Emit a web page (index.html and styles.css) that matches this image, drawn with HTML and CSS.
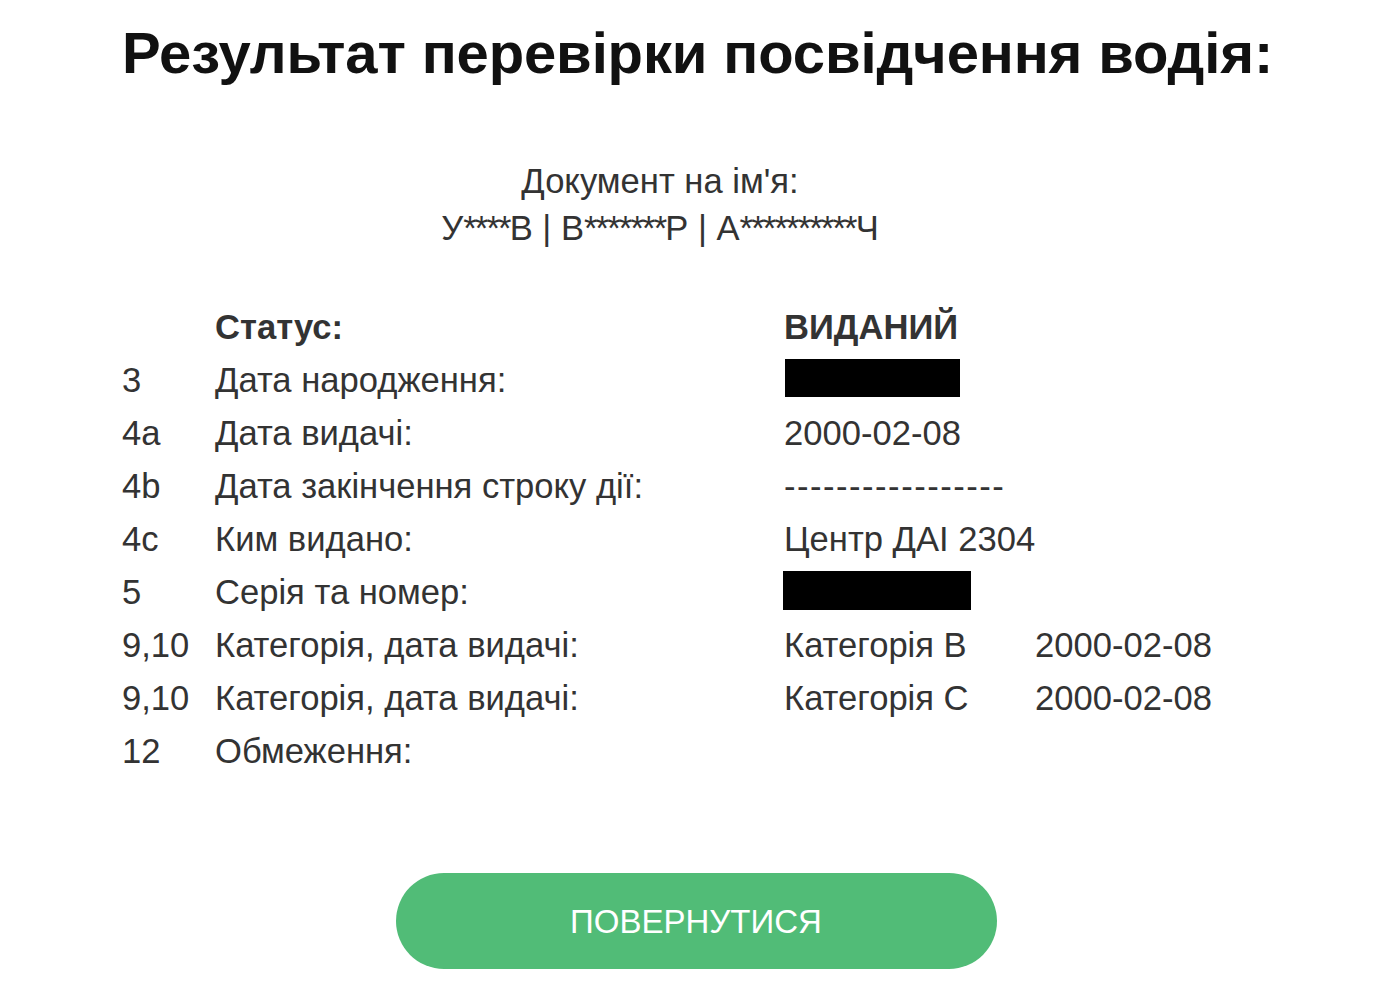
FILE: index.html
```html
<!DOCTYPE html>
<html lang="uk">
<head>
<meta charset="utf-8">
<title>Результат перевірки посвідчення водія</title>
<link rel="stylesheet" href="styles.css">
</head>
<body>
<main class="page">
  <h1 class="title">Результат перевірки посвідчення водія:</h1>
  <section class="owner">
    <p class="owner-label">Документ на ім'я:</p>
    <p class="owner-name">У<span class="mask">****</span>В | В<span class="mask">*******</span>Р | А<span class="mask">**********</span>Ч</p>
  </section>
  <div class="info">
    <div class="num"></div><div class="label strong">Статус:</div><div class="value strong">ВИДАНИЙ</div><div class="extra"></div>
    <div class="num">3</div><div class="label">Дата народження:</div><div class="value"><span class="redact redact-birth"></span></div><div class="extra"></div>
    <div class="num">4a</div><div class="label">Дата видачі:</div><div class="value">2000-02-08</div><div class="extra"></div>
    <div class="num">4b</div><div class="label">Дата закінчення строку дії:</div><div class="value"><span class="dashes">-----------------</span></div><div class="extra"></div>
    <div class="num">4c</div><div class="label">Ким видано:</div><div class="value">Центр ДАІ 2304</div><div class="extra"></div>
    <div class="num">5</div><div class="label">Серія та номер:</div><div class="value"><span class="redact redact-number"></span></div><div class="extra"></div>
    <div class="num">9,10</div><div class="label">Категорія, дата видачі:</div><div class="value">Категорія B</div><div class="extra">2000-02-08</div>
    <div class="num">9,10</div><div class="label">Категорія, дата видачі:</div><div class="value">Категорія C</div><div class="extra">2000-02-08</div>
    <div class="num">12</div><div class="label">Обмеження:</div><div class="value"></div><div class="extra"></div>
  </div>
  <div class="actions">
    <button class="back" type="button">ПОВЕРНУТИСЯ</button>
  </div>
</main>
</body>
</html>
```

FILE: styles.css
```css
* { box-sizing: border-box; }
html, body { margin: 0; padding: 0; background: #ffffff; }
body {
  font-family: "Liberation Sans", Arial, Helvetica, sans-serif;
  color: #333333;
}
.page {
  width: 1150px;
  margin-left: 122px;
  padding-top: 18px;
}
.title {
  margin: 0;
  font-size: 58px;
  line-height: 70px;
  font-weight: 700;
  color: #111111;
  text-align: center;
  white-space: nowrap;
  letter-spacing: -0.13px;
}
.owner {
  margin: 70px 74px 0 0;
  text-align: center;
  font-size: 34.6px;
}
.owner p { margin: 0; line-height: 47px; }
.mask { letter-spacing: -1.85px; }
.info {
  margin-top: 49px;
  display: grid;
  grid-template-columns: 93px 569px 251px auto;
  grid-auto-rows: 53px;
  font-size: 34.6px;
  line-height: 53px;
  white-space: nowrap;
}
.strong { font-weight: 700; }
.dashes { letter-spacing: 1.5px; }
.redact {
  display: block;
  background: #000000;
}
.redact-birth { width: 175px; height: 38px; margin-top: 5px; margin-left: 1px; }
.redact-number { width: 188px; height: 39px; margin-top: 5px; margin-left: -1px; }
.actions {
  margin-top: 95px;
  display: flex;
  justify-content: center;
}
.back {
  width: 601px;
  height: 96px;
  margin-left: -2px;
  padding-top: 3px;
  border: none;
  border-radius: 48px;
  background: #51bc77;
  color: #ffffff;
  font-family: "Liberation Sans", Arial, Helvetica, sans-serif;
  font-size: 33px;
  cursor: pointer;
}
```
